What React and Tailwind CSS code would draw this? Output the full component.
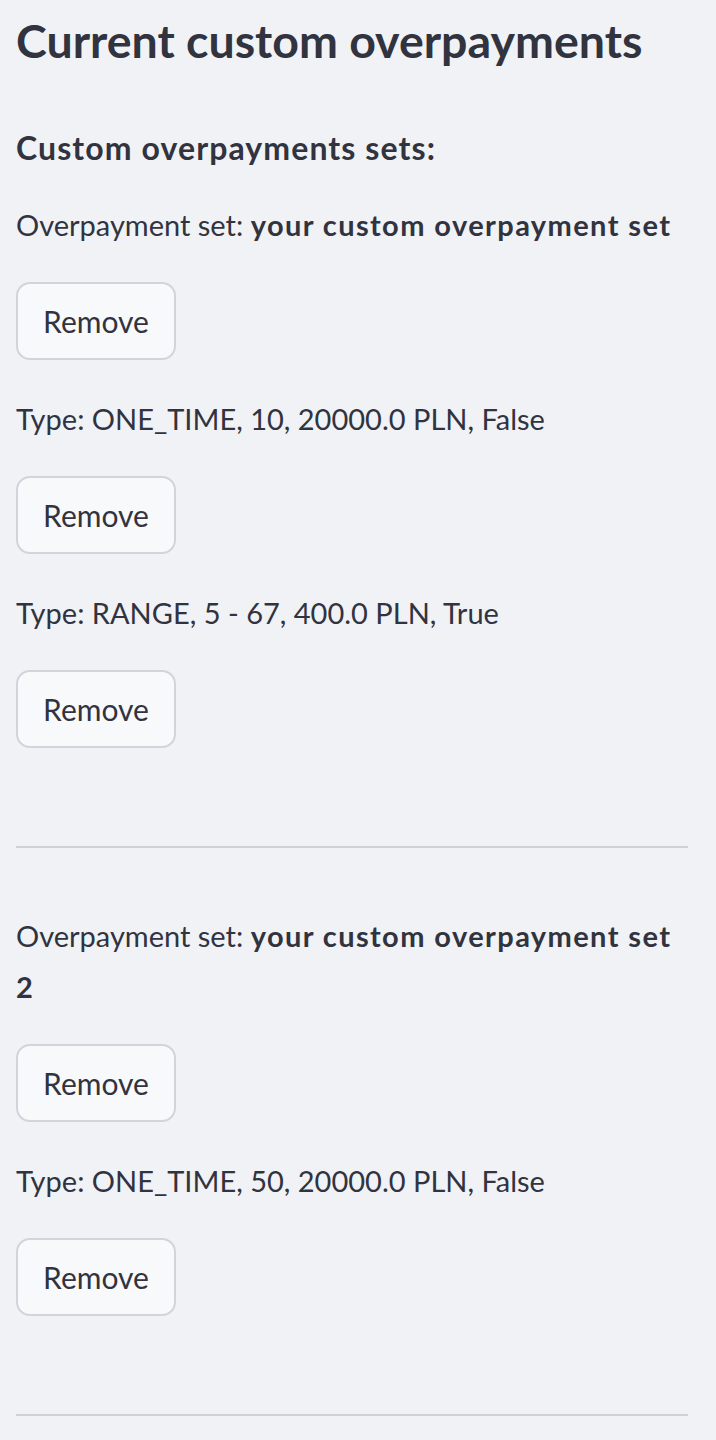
import React from "react";

const sets = [
  {
    name: "your custom overpayment set",
    items: ["ONE_TIME, 10, 20000.0 PLN, False", "RANGE, 5 - 67, 400.0 PLN, True"],
  },
  {
    name: "your custom overpayment set 2",
    items: ["ONE_TIME, 50, 20000.0 PLN, False"],
  },
];

function RemoveButton() {
  return (
    <button className="flex h-[78px] w-[160px] items-center justify-center rounded-[14px] border-2 border-[#d3d4d9] bg-[#f8f9fb] text-[30px] text-[#31333f]">
      Remove
    </button>
  );
}

export default function App() {
  return (
    <div
      className="min-h-[1440px] bg-[#f0f2f6] px-4 text-[29px] leading-[51px] text-[#31333f]"
      style={{ fontFamily: "Lato, 'Noto Sans', sans-serif" }}
    >
      <h2 className="pt-[11px] text-[46.5px] font-bold leading-[58px]">Current custom overpayments</h2>
      <p className="mt-[53px] text-[32px] font-bold tracking-[1.1px]">Custom overpayments sets:</p>

      {sets.map((s, i) => (
        <div key={s.name}>
          <p className={i > 0 ? "mt-[62px] w-[672px]" : "mt-[26px] w-[672px]"}>
            Overpayment set: <b className="tracking-[1.4px]">{s.name}</b>
          </p>
          <div className="mt-[32px]">
            <RemoveButton />
          </div>
          {s.items.map((t) => (
            <div key={t}>
              <p className="mt-[33px]">Type: {t}</p>
              <div className="mt-[32px]">
                <RemoveButton />
              </div>
            </div>
          ))}
          <hr className="mt-[98px] w-[672px] border-t-2 border-[#d0d1d6]" />
        </div>
      ))}
    </div>
  );
}
